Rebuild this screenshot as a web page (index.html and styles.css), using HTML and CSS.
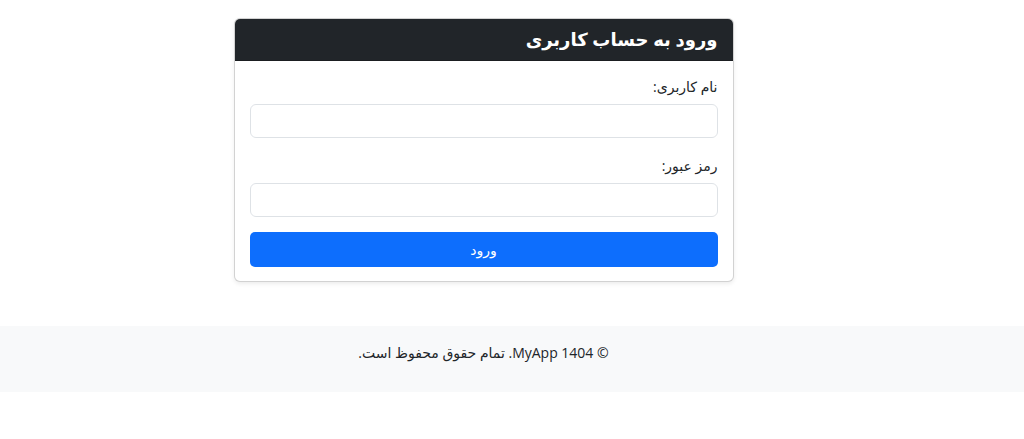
FILE: index.html
```html
<!DOCTYPE html>
<html lang="fa" dir="rtl">
<head>
<meta charset="utf-8">
<title>ورود</title>
<link rel="stylesheet" href="styles.css">
</head>
<body>
<div class="page">
  <main class="main">
    <div class="card">
      <div class="card-header">
        <h4 class="card-title">ورود به حساب کاربری</h4>
      </div>
      <form class="card-body">
        <div class="field field-first">
          <label class="label" for="u">نام کاربری:</label>
          <input class="input" id="u" type="text">
        </div>
        <div class="field field-last">
          <label class="label" for="p">رمز عبور:</label>
          <input class="input" id="p" type="password">
        </div>
        <button class="btn" type="button">ورود</button>
      </form>
    </div>
  </main>
  <footer class="footer">
    <div class="footer-inner">
      <p class="footer-text">© 1404 MyApp. تمام حقوق محفوظ است.</p>
    </div>
  </footer>
</div>
</body>
</html>
```
FILE: styles.css
```css
* { box-sizing: border-box; }
html, body { margin: 0; padding: 0; background: #fff; }
body {
  font-family: "Open Sans", "DejaVu Sans", sans-serif;
  color: #212529;
  font-size: 14px;
}
.main {
  width: 967px;
  margin: 0 auto 0 0;
  padding-top: 18px;
  height: 326px;
}
.card {
  width: 500px;
  margin: 0 auto;
  border: 1px solid rgba(0,0,0,0.175);
  border-radius: 6px;
  box-shadow: 0 2px 4px rgba(0,0,0,0.075);
  background: #fff;
  overflow: hidden;
}
.card-header {
  background: #212529;
  height: 42px;
  padding: 0 15px;
  display: flex;
  align-items: center;
  border-bottom: 1px solid rgba(0,0,0,0.175);
}
.card-title {
  margin: 0;
  color: #fff;
  font-size: 18px;
  font-weight: 700;
  line-height: 1.2;
}
.card-body {
  padding: 15px 15px 14px;
  margin: 0;
}
.field-first { margin-bottom: 17px; }
.field-last { margin-bottom: 15px; }
.label {
  display: block;
  font-size: 14px;
  line-height: 21px;
  margin-bottom: 7px;
  color: #212529;
}
.input {
  display: block;
  width: 100%;
  height: 34px;
  border: 1px solid #dee2e6;
  border-radius: 6px;
  background: #fff;
  font: inherit;
  padding: 0 12px;
}
.btn {
  display: block;
  width: 100%;
  height: 35px;
  border: 0;
  border-radius: 5px;
  background: #0d6efd;
  color: #fff;
  font: inherit;
  font-size: 14px;
}
.footer {
  background: #f8f9fa;
  height: 66px;
  padding-top: 16px;
}
.footer-inner { width: 967px; margin: 0 auto 0 0; text-align: center; }
.footer-text {
  margin: 0;
  font-size: 14px;
  line-height: 22px;
  color: #212529;
}
```
